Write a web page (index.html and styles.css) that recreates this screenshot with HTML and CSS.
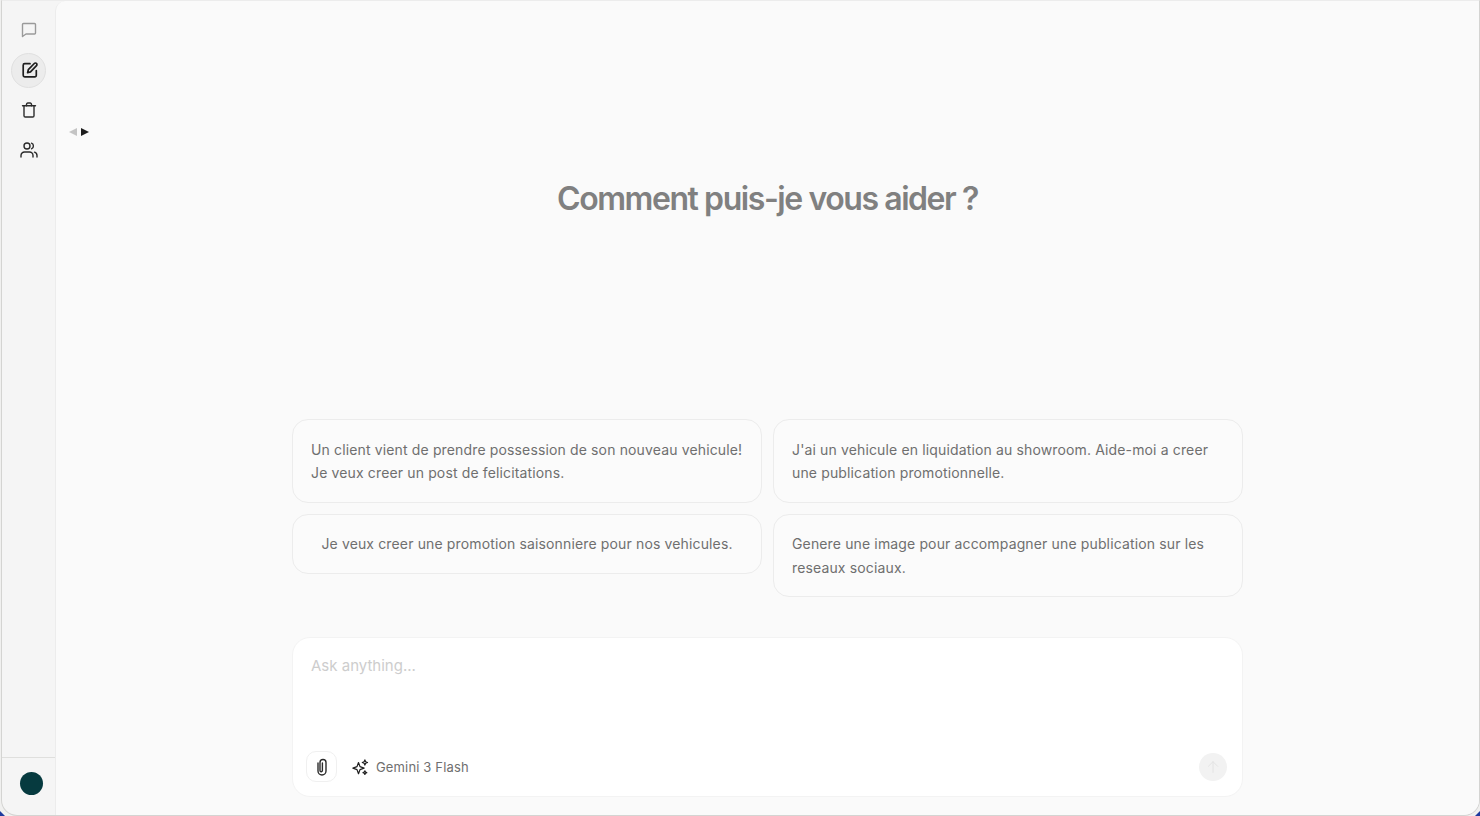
FILE: index.html
```html
<!DOCTYPE html>
<html lang="fr">
<head>
    <meta charset="UTF-8">
    <title>Comment puis-je vous aider ?</title>
    <link rel="stylesheet" href="styles.css">
</head>
<body>
    <div class="app">
        <aside class="sidebar">
            <nav class="side-nav">
                <button class="side-btn side-btn-muted" aria-label="Conversations">
                    <svg viewBox="0 0 16 16" width="16" height="16"><path d="M2.500 1.500h11a1 1 0 0 1 1 1v8.500a1 1 0 0 1-1 1H5l-3.500 2.500V2.500a1 1 0 0 1 1-1z"/></svg>
                </button>
                <button class="side-btn side-btn-active" aria-label="Nouveau">
                    <svg viewBox="0 0 16 16" width="16" height="16"><path d="M8 1.700H2.700a1.500 1.500 0 0 0-1.500 1.500v10.100a1.500 1.500 0 0 0 1.500 1.500h10.100a1.500 1.500 0 0 0 1.500-1.500V8.500"/><path d="M12.300 1.500a1.400 1.400 0 0 1 2.200 2.100l-6 6.300-2.900.8.700-3z"/></svg>
                </button>
                <button class="side-btn" aria-label="Supprimer">
                    <svg viewBox="0 0 16 16" width="16" height="16"><path d="M1.500 3.700h13"/><path d="M13 3.700v10a1.300 1.300 0 0 1-1.300 1.300H4.300A1.300 1.300 0 0 1 3 13.700v-10"/><path d="M5.500 3.700V2.300A1.300 1.300 0 0 1 6.800 1h2.400a1.300 1.300 0 0 1 1.300 1.300v1.400"/></svg>
                </button>
                <button class="side-btn" aria-label="Utilisateurs">
                    <svg viewBox="0 0 18 16" width="18" height="16"><circle cx="7" cy="4" r="3"/><path d="M1 15v-1.500A3.500 3.500 0 0 1 4.500 10h5a3.500 3.500 0 0 1 3.500 3.500V15"/><path d="M11.500 1.200a3 3 0 0 1 0 5.600"/><path d="M17 15v-1.500a3.500 3.500 0 0 0-2.500-3.300"/></svg>
                </button>
            </nav>
            <div class="side-foot">
                <span class="avatar"></span>
            </div>
        </aside>

        <main class="main">
            <div class="scroll-arrows">
                <span class="arrow-left"></span>
                <span class="arrow-right"></span>
            </div>

            <h1 class="title">Comment puis-je vous aider ?</h1>

            <div class="content">
                <div class="suggestions">
                    <div class="suggest-col">
                        <button class="card">Un client vient de prendre possession de son nouveau vehicule! Je veux creer un post de felicitations.</button>
                        <button class="card card-center">Je veux creer une promotion saisonniere pour nos vehicules.</button>
                    </div>
                    <div class="suggest-col">
                        <button class="card">J'ai un vehicule en liquidation au showroom. Aide-moi a creer une publication promotionnelle.</button>
                        <button class="card">Genere une image pour accompagner une publication sur les reseaux sociaux.</button>
                    </div>
                </div>

                <div class="composer">
                    <div class="placeholder">Ask anything...</div>
                    <div class="composer-bar">
                        <button class="attach" aria-label="Joindre">
                            <svg viewBox="0 0 12 18" width="12" height="18"><path d="M2 5v8a4 4 0 0 0 8 0V4.500a3 3 0 0 0-6 0v8a1 1 0 0 0 2.400 0V5"/></svg>
                        </button>
                        <div class="model">
                            <svg viewBox="0 0 24 24" width="18" height="18"><path d="M10 6l2 5.500 5.500 2-5.500 2-2 5.500-2-5.500-5.500-2 5.500-2z"/><path d="M18.500 2.500l1 2.500 2.500 1-2.500 1-1 2.500-1-2.500-2.500-1 2.500-1z"/><path d="M18.500 17l.8 1.700 1.700.8-1.700.8-.8 1.700-.8-1.700-1.700-.8 1.700-.8z"/></svg>
                            <span>Gemini 3 Flash</span>
                        </div>
                        <button class="send" aria-label="Envoyer">
                            <svg viewBox="0 0 24 24" width="16" height="16"><path d="M12 20V4"/><path d="M5 11l7-7 7 7"/></svg>
                        </button>
                    </div>
                </div>
            </div>
        </main>
    </div>
</body>
</html>
```

FILE: styles.css
```css
* {
    margin: 0;
    padding: 0;
    box-sizing: border-box;
}

html, body {
    height: 100%;
}

body {
    font-family: Inter, "Liberation Sans", sans-serif;
    background: #f0f0ef;
    overflow: hidden;
    position: relative;
}

/* desktop wallpaper showing in the two bottom corners */
body::before, body::after {
    content: "";
    position: absolute;
    bottom: 0;
    width: 5px;
    height: 5px;
    background: #1f3a9e;
}

body::before {
    left: 0;
    clip-path: polygon(0 0, 100% 100%, 0 100%);
}

body::after {
    right: 0;
    clip-path: polygon(100% 0, 100% 100%, 0 100%);
}

button {
    font-family: inherit;
    background: none;
    border: none;
}

svg {
    display: block;
    fill: none;
    stroke: currentColor;
    stroke-width: 1.400;
    stroke-linecap: round;
    stroke-linejoin: round;
}

.app {
    height: 816px;
    margin-left: 1px;
    display: flex;
    background: #f5f5f5;
    border-left: 1px solid #d4d4d2;
    border-right: 1px solid #d4d4d2;
    border-bottom: 1px solid #d4d4d2;
    border-top: 1px solid #ececec;
    border-radius: 0 0 16px 16px;
    overflow: hidden;
}

/* sidebar */
.sidebar {
    width: 53px;
    flex-shrink: 0;
    display: flex;
    flex-direction: column;
    justify-content: space-between;
}

.side-nav {
    display: flex;
    flex-direction: column;
    align-items: center;
    gap: 5px;
    padding-top: 11.500px;
}

.side-btn {
    width: 35px;
    height: 35px;
    border-radius: 50%;
    display: flex;
    align-items: center;
    justify-content: center;
    color: #2b2b2b;
    border: 1px solid transparent;
}

.side-btn-muted {
    color: #9a9a9a;
}

.side-btn-active {
    background: #ececec;
    border-color: #e0e0e0;
    color: #1f1f1f;
    padding-left: 2px;
}

.side-btn-active svg {
    stroke-width: 1.700;
}

.side-foot {
    height: 58px;
    border-top: 1px solid #dfdfdd;
    display: flex;
    align-items: center;
    justify-content: center;
    padding-left: 5px;
    padding-bottom: 6px;
}

.avatar {
    width: 23px;
    height: 23px;
    border-radius: 50%;
    background: #063a3f;
}

/* main */
.main {
    flex: 1;
    position: relative;
    background: #fafafa;
    border-left: 1px solid #ececec;
    border-top-left-radius: 10px;
    display: flex;
    flex-direction: column;
    align-items: center;
}

.scroll-arrows {
    position: absolute;
    top: 127px;
    left: 13px;
    display: flex;
    gap: 4px;
}

.arrow-left, .arrow-right {
    width: 0;
    height: 0;
    border-top: 4.500px solid transparent;
    border-bottom: 4.500px solid transparent;
}

.arrow-left {
    border-right: 8px solid #c4c4c4;
}

.arrow-right {
    border-left: 8px solid #1c1c1c;
}

.title {
    margin-top: 179px;
    font-size: 32px;
    line-height: 38px;
    font-weight: 600;
    letter-spacing: -1.430px;
    color: #808080;
}

.content {
    width: 951px;
    margin-top: 201px;
}

.suggestions {
    display: grid;
    grid-template-columns: 470px 470px;
    column-gap: 11px;
}

.suggest-col {
    display: flex;
    flex-direction: column;
    align-items: stretch;
    gap: 11px;
}

.card {
    display: block;
    width: 100%;
    padding: 17.600px 18px 17px;
    background: #fbfbfb;
    border: 1px solid #ececec;
    border-radius: 16px;
    font-size: 14px;
    letter-spacing: 0.140px;
    line-height: 23.500px;
    color: #6f6f6f;
    text-align: left;
}

.card-center {
    text-align: center;
}

.composer {
    margin-top: 40px;
    height: 160px;
    background: #fff;
    border: 1px solid #f3f3f3;
    border-radius: 18px;
    display: flex;
    flex-direction: column;
    justify-content: space-between;
    padding: 17px 15px 14px 13px;
}

.placeholder {
    padding-left: 5px;
    font-size: 15px;
    line-height: 22px;
    color: #cdcdcd;
}

.composer-bar {
    display: flex;
    align-items: center;
}

.attach {
    width: 31px;
    height: 31px;
    border: 1px solid #f0f0f0;
    border-radius: 10px;
    background: #fff;
    display: flex;
    align-items: center;
    justify-content: center;
    color: #2b2b2b;
}

.model {
    display: flex;
    align-items: center;
    gap: 7px;
    margin-left: 14px;
    font-size: 13px;
    letter-spacing: 0.150px;
    color: #6f6f6f;
}

.model svg {
    color: #1f1f1f;
    stroke-width: 1.600;
}

.send {
    margin-left: auto;
    width: 28px;
    height: 28px;
    border-radius: 50%;
    background: #f2f2f2;
    color: #e2e2e2;
    display: flex;
    align-items: center;
    justify-content: center;
}
```
